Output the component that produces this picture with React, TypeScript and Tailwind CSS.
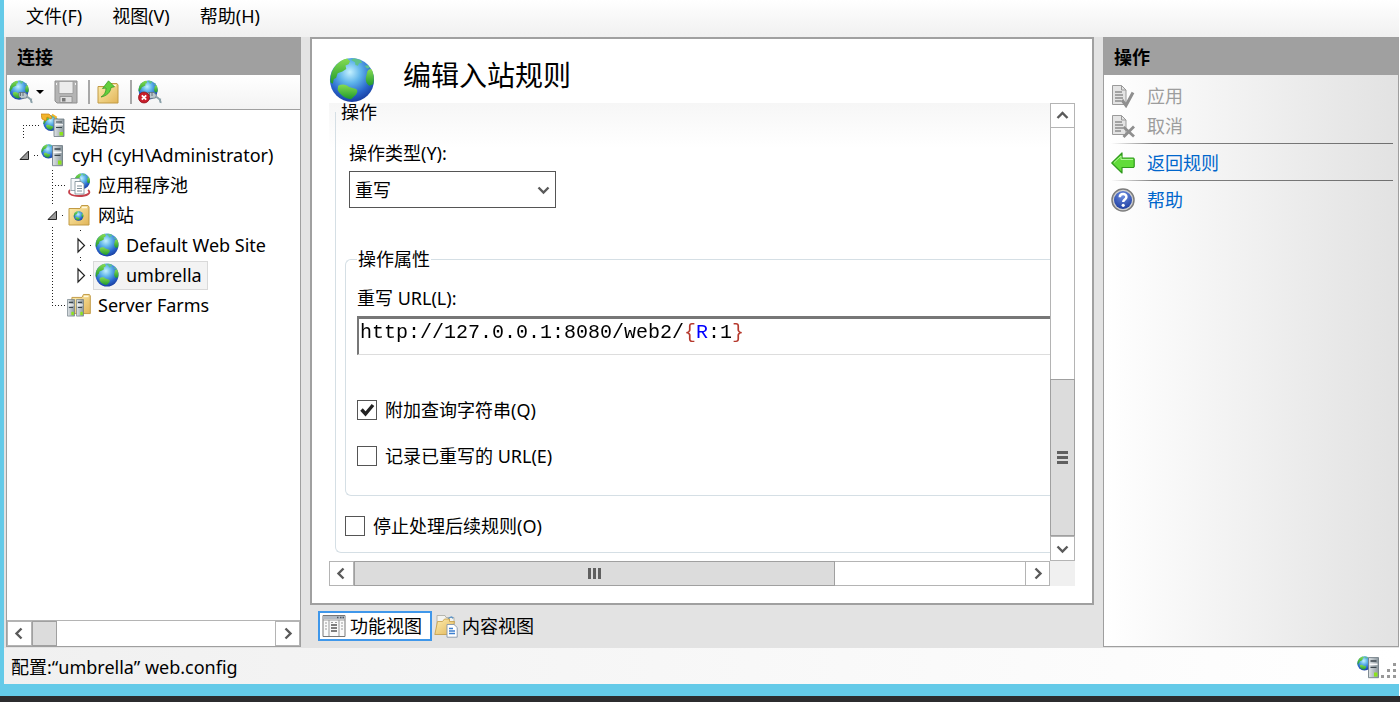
import React, { useState } from "react";

const Defs = () => (
  <svg className="absolute size-0" aria-hidden="true">
    <defs>
      <radialGradient id="ocean" cx="0.45" cy="0.32" r="0.72">
        <stop offset="0" stopColor="#c4f1ff" />
        <stop offset="0.35" stopColor="#5fb4ea" />
        <stop offset="0.7" stopColor="#2a66cc" />
        <stop offset="1" stopColor="#16379a" />
      </radialGradient>
      <linearGradient id="land" x1="0" y1="0" x2="0" y2="1">
        <stop offset="0" stopColor="#86dc52" />
        <stop offset="1" stopColor="#1f9a2c" />
      </linearGradient>
      <linearGradient id="folder" x1="0" y1="0" x2="1" y2="1">
        <stop offset="0" stopColor="#fdeeb0" />
        <stop offset="1" stopColor="#e2b558" />
      </linearGradient>
      <linearGradient id="metal" x1="0" y1="0" x2="1" y2="0">
        <stop offset="0" stopColor="#dfe4e7" />
        <stop offset="1" stopColor="#8b979e" />
      </linearGradient>
      <radialGradient id="helpBlue" cx="0.5" cy="0.25" r="0.8">
        <stop offset="0" stopColor="#6f8fe0" />
        <stop offset="1" stopColor="#1a3a9e" />
      </radialGradient>
    </defs>
  </svg>
);

// 24x24 globe, shared by most of the icons
const GlobeShape = ({ transform }: { transform?: string }) => (
  <g transform={transform}>
    <circle cx="12" cy="12" r="11.500" fill="url(#ocean)" />
    <path
      d="M1 9.500C2 5 5.500 1.600 9.500.8l1.500 1.400-.8 1.600-1.600.6.4 1.800-2 1.300-2.500 1-.8 2.500-1.200.5-.5 2.500-1.300-.8z"
      fill="url(#land)"
    />
    <path d="M11.500 1.500 13 .7l3.500.8.8 1.500-1.600.2-.6 1.300-1.300-.3-.2-1.500z" fill="#5fc28a" />
    <path
      d="M20 7.500c1-1.400 2-1.500 2.500-.6 1 2.300 1.200 5 .5 7.300l-2 .8c-1.300-.8-2-2.200-1.800-4z"
      fill="url(#land)"
    />
    <path
      d="M4.800 15c2-1.200 4.200-.8 5.700.6l3.700 1.100c1 .8.6 2-.2 3L11.500 22C8 21.800 5 19 4.500 17z"
      fill="url(#land)"
    />
    <path d="m18.500 4.500 2-.2.800 1.400-1.500.3z" fill="#5fc28a" />
  </g>
);

const ServerShape = ({ transform }: { transform?: string }) => (
  <g transform={transform}>
    <path d="M0 .5h10v17.500H0z" fill="url(#metal)" stroke="#6d7a82" strokeWidth="0.8" />
    <path d="M2 3.500h6M2 9h6" stroke="#3b464d" strokeWidth="1.200" />
    <path d="M1 6.300h8" stroke="#fff" strokeWidth="1.200" />
    <path d="M5.500 13.500h3.500v3.500H5.500z" fill="#8be31c" />
  </g>
);

const FolderShape = ({ transform }: { transform?: string }) => (
  <g transform={transform}>
    <path
      d="M1 4.500h11l1.500-3h6.500l1 1.500v18H1z"
      fill="url(#folder)"
      stroke="#c19a45"
      strokeWidth="1"
    />
    <path d="M14 3.500h5" stroke="#fff8dc" strokeWidth="1.500" />
  </g>
);

const Icon = ({ className = "size-6", children }: { className?: string; children: React.ReactNode }) => (
  <svg viewBox="0 0 24 24" className={`${className} shrink-0`} fill="none" aria-hidden="true">
    {children}
  </svg>
);

const GlobeIcon = ({ className }: { className?: string }) => (
  <Icon className={className}>
    <GlobeShape />
  </Icon>
);

const ConnectIcon = ({ failed }: { failed?: boolean }) => (
  <Icon>
    <GlobeShape transform="scale(.84)" />
    <path d="M10 12.500h6l2.500 2.500-1 3-5 .5-2.500-2z" fill="#b9c6cc" stroke="#66757d" strokeWidth=".8" />
    <path d="M11.500 12v4M14 12v4" stroke="#66757d" strokeWidth="1" />
    <path d="M18 17c2 0 2 2 4 2.500-.5 1.500 1 2 .5 3.500" stroke="#8aa0a8" strokeWidth="2" />
    {failed && (
      <>
        <circle cx="6" cy="17.500" r="5.500" fill="#c81e2b" stroke="#8d0f19" strokeWidth=".7" />
        <path d="m3.800 15.300 4.400 4.400m0-4.400-4.400 4.400" stroke="#fff" strokeWidth="1.800" />
      </>
    )}
  </Icon>
);

const SaveIcon = () => (
  <Icon>
    <path d="M1 1h22v22H3l-2-2z" fill="#b4b4b4" stroke="#8f8f8f" />
    <path d="M5 1.500h14v12H5z" fill="#ececec" stroke="#999" strokeWidth=".8" />
    <path d="M6 16.500h12v6H6z" fill="#dedede" stroke="#8c8c8c" strokeWidth=".8" />
    <path d="M8 18h3.500v3.500H8z" fill="#777" />
    <path d="M2.500 3v2M21.500 3v2" stroke="#f4f4f4" />
  </Icon>
);

const UpFolderIcon = () => (
  <Icon>
    <FolderShape transform="translate(1 2)" />
    <path
      d="M5 17c3.500-2 5-5 5-9L6.500 8.500 12.500.8l6 6-3.500.7C14.500 12.500 10.500 16 5 17z"
      fill="#63cf3c"
      stroke="#2f9221"
      strokeWidth=".7"
    />
  </Icon>
);

const StartPageIcon = () => (
  <Icon>
    <GlobeShape transform="translate(2 2) scale(.68)" />
    <path d="M0 1h8l3 3-1 2-4-2-1 4-4-2z" fill="#f3b52b" stroke="#c67d12" strokeWidth=".7" />
    <path d="M11 1.500 15 4l-1 2" stroke="#f3b52b" strokeWidth="1.800" />
    <ServerShape transform="translate(13 5.500)" />
  </Icon>
);

const ServerIcon = () => (
  <Icon>
    <GlobeShape transform="translate(0 1) scale(.62)" />
    <ServerShape transform="translate(11.500 2) scale(1 1.150)" />
  </Icon>
);

const AppPoolIcon = () => (
  <Icon>
    <GlobeShape transform="translate(7 0) scale(.68)" />
    <path d="M3 17c-3 3 1 6 9 6s13-3 9-6" stroke="#c5414b" strokeWidth="1.800" />
    <path d="M4 5.500h9v12H4z" fill="#f5f8fa" stroke="#8496a0" strokeWidth=".8" />
    <path d="M8 8.500h6l3 2.500v10H8z" fill="#fff" stroke="#73858f" strokeWidth=".8" />
    <path d="M10 13h5M10 15.500h5M10 18h5" stroke="#7d8f99" />
  </Icon>
);

const SitesIcon = () => (
  <Icon>
    <FolderShape transform="translate(1 1)" />
    <GlobeShape transform="translate(6.500 8) scale(.42)" />
  </Icon>
);

const FarmIcon = () => (
  <Icon>
    <FolderShape transform="translate(4 0) scale(.92 .98)" />
    <ServerShape transform="translate(.5 6) scale(.7 .95)" />
    <ServerShape transform="translate(9.500 6) scale(.7 .95)" />
  </Icon>
);

const DocShape = () => (
  <>
    <path d="M1.500 1.500h9l4.500 4.500v14.500H1.500z" fill="#e4e4e4" stroke="#9a9a9a" />
    <path d="M10.500 1.500V6h4.500" stroke="#9a9a9a" />
    <path d="M4 8h7M4 11h8M4 14h8M4 17h6" stroke="#8d8d8d" strokeWidth="1.300" />
  </>
);

const ApplyIcon = () => (
  <Icon>
    <DocShape />
    <path d="m11 16 4 5.500L22 8.500" stroke="#8f8f8f" strokeWidth="3" />
  </Icon>
);

const CancelIcon = () => (
  <Icon>
    <DocShape />
    <path d="m12.500 13 10.500 9.500M23 12.500 12.500 23" stroke="#8f8f8f" strokeWidth="2.800" />
  </Icon>
);

const BackIcon = () => (
  <Icon>
    <path
      d="M.8 12 11 2v5h11.500l.7 1v7.500l-.7 1H11V22z"
      fill="#62dc3a"
      stroke="#2f9a1c"
      strokeWidth="1.200"
      strokeLinejoin="round"
    />
    <path d="M3 11.500 10 5v3.500h12" stroke="#b4f59a" strokeWidth="1" />
  </Icon>
);

const HelpIcon = () => (
  <Icon>
    <circle cx="12" cy="12" r="11" fill="#d0d0d0" stroke="#7c7c7c" strokeWidth="1.500" />
    <circle cx="12" cy="12" r="9" fill="url(#helpBlue)" />
    <path d="M8.800 9.300c0-4.200 6.600-4.200 6.600-.4 0 2.600-3.200 2.500-3.200 5.100" stroke="#fff" strokeWidth="2.500" />
    <circle cx="12.200" cy="17.300" r="1.600" fill="#fff" />
  </Icon>
);

const FeaturesIcon = () => (
  <Icon>
    <path d="M1 1.500h22v21H1z" fill="#fafafa" stroke="#777" />
    <path d="M1.500 2h21v3h-21z" fill="#b3bac2" />
    <path d="M15 3.500h1.500M18 3.500h1.500M20.500 3.500H22" stroke="#4f5862" strokeWidth="1.500" />
    <path d="M1 6h22M7 6v16M17 6v16" stroke="#999" />
    <path d="M9 11h6M9 14h6M9 17h6" stroke="#555" strokeWidth="1.500" />
    <path d="M3 9h2M3 12h2M3 15h2M19 9h2M19 12h2M19 15h2M9 8.500h2M13 8.500h2" stroke="#9a9a9a" />
  </Icon>
);

const ContentIcon = () => (
  <Icon>
    <path d="M3 1.500h8l1 2h8v14H3z" fill="#f4f4f0" stroke="#a8a8a0" strokeWidth=".8" />
    <path d="M14 5.500c2-3 4-3 5-1" stroke="#5d94c8" strokeWidth="1.500" />
    <path d="m.8 20.500 2.700-13h5l2-2.500h5v2.500h5L18 20.500z" fill="url(#folder)" stroke="#c19a45" strokeWidth=".8" />
    <path d="M13 10.500h7l3.200 3v9.700H13z" fill="#fff" stroke="#8595a8" strokeWidth=".9" />
    <path d="M15 14.500h4M15 17h6M15 19.500h6" stroke="#3d7fd0" strokeWidth="1.300" />
  </Icon>
);

const chevrons = {
  left: "M8.500 1.500 3.500 6.500l5 5",
  right: "m4.500 1.500 5 5-5 5",
  up: "m1.500 9 5-5 5 5",
  down: "m1.500 4.500 5 5 5-5",
};

const Chevron = ({ dir }: { dir: keyof typeof chevrons }) => (
  <svg viewBox="0 0 13 13" className="size-[13px]" fill="none" aria-hidden="true">
    <path d={chevrons[dir]} stroke="#5a5a5a" strokeWidth="2.400" />
  </svg>
);

const ScrollButton = ({ dir, label }: { dir: keyof typeof chevrons; label: string }) => (
  <button
    aria-label={label}
    className="flex size-[25px] shrink-0 items-center justify-center border border-[#b4b4b4] bg-white"
  >
    <Chevron dir={dir} />
  </button>
);

// guides are drawn in a gutter whose width is the indent of the level
const nodes = [
  { label: "起始页", level: 0, icon: <StartPageIcon />, dots: "M16.500 15V30M16 15.500H32" },
  {
    label: "cyH (cyH\\Administrator)",
    level: 0,
    icon: <ServerIcon />,
    dots: "M27 15.500H32",
    open: true,
    arrowX: 13,
  },
  { label: "应用程序池", level: 1, icon: <AppPoolIcon />, dots: "M45.500 0V30M45 15.500H59" },
  { label: "网站", level: 1, icon: <SitesIcon />, dots: "M45.500 0V4M45.500 27V30M55 15.500H59", open: true, arrowX: 41 },
  {
    label: "Default Web Site",
    level: 2,
    icon: <GlobeIcon />,
    dots: "M45.500 0V30M73.500 0V3M73.500 27V30M83 15.500H86",
    open: false,
    arrowX: 71,
  },
  {
    label: "umbrella",
    level: 2,
    icon: <GlobeIcon />,
    dots: "M45.500 0V30M73.500 0V3M83 15.500H86",
    open: false,
    arrowX: 71,
    selected: true,
  },
  { label: "Server Farms", level: 1, icon: <FarmIcon />, dots: "M45.500 0V15M45 15.500H59" },
];

const gutterWidths = ["w-8", "w-[58px]", "w-[86px]"];

const Tree = () => (
  <ul role="tree" aria-label="连接" className="flex-1">
    {nodes.map((n) => (
      <li
        key={n.label}
        role="treeitem"
        aria-expanded={n.open}
        aria-selected={!!n.selected}
        className="flex h-[30px] items-center"
      >
        <svg
          className={`h-[30px] shrink-0 ${gutterWidths[n.level]}`}
          fill="none"
          aria-hidden="true"
        >
          <path d={n.dots} stroke="#222" strokeWidth="1" strokeDasharray="1 2" />
          {n.open === true && (
            <path
              d="M0 8.500 8.500 0v8.500z"
              transform={`translate(${n.arrowX} 11)`}
              fill="#999"
              stroke="#222"
            />
          )}
          {n.open === false && (
            <path
              d="M0 0 6.500 6.500 0 13z"
              transform={`translate(${n.arrowX} 9)`}
              fill="#fff"
              stroke="#222"
              strokeWidth="1.200"
            />
          )}
        </svg>
        <button
          className={`flex h-[29px] items-center gap-[7px] whitespace-nowrap border pr-[5px] pl-px ${
            n.selected ? "border-[#d9d9d9] bg-[#f3f3f3]" : "border-transparent"
          }`}
        >
          {n.icon}
          {n.label}
        </button>
      </li>
    ))}
  </ul>
);

const Connections = () => (
  <section className="flex w-[295px] shrink-0 flex-col border border-[#9f9f9f] bg-white">
    <h2 className="flex h-[37px] items-center bg-[#a0a0a0] px-[10px] font-bold">连接</h2>
    <div className="flex h-[35px] items-center border-b border-[#a0a0a0] bg-linear-to-b from-white to-[#f3f3f3] pl-[2px]">
      <button aria-label="连接到" className="flex items-center gap-[3px]">
        <ConnectIcon />
        <svg viewBox="0 0 8 4" className="h-1 w-2" aria-hidden="true">
          <path d="M0 0h8L4 4z" fill="#000" />
        </svg>
      </button>
      <button aria-label="保存" className="ml-[10px]">
        <SaveIcon />
      </button>
      <span className="mr-[6px] ml-[10px] h-6 w-[2px] bg-[#a8a8a8]" />
      <button aria-label="向上">
        <UpFolderIcon />
      </button>
      <span className="mr-[6px] ml-[10px] h-6 w-[2px] bg-[#a8a8a8]" />
      <button aria-label="断开连接">
        <ConnectIcon failed />
      </button>
    </div>
    <Tree />
    <div className="flex border-t border-[#b4b4b4]">
      <ScrollButton dir="left" label="向左滚动" />
      <span className="w-[25px] border border-[#a0a0a0] bg-[#dcdcdc]" />
      <span className="flex-1" />
      <ScrollButton dir="right" label="向右滚动" />
    </div>
  </section>
);

const CheckBox = ({ label, initial = false }: { label: string; initial?: boolean }) => {
  const [checked, setChecked] = useState(initial);
  return (
    <label className="flex h-6 w-fit items-center gap-2">
      <span className="relative flex size-5">
        <input
          type="checkbox"
          checked={checked}
          onChange={(e) => setChecked(e.target.checked)}
          className="size-5 appearance-none border border-[#555] bg-white"
        />
        {checked && (
          <svg
            viewBox="0 0 20 20"
            className="pointer-events-none absolute inset-0 size-5"
            fill="none"
            aria-hidden="true"
          >
            <path d="m4.500 9.500 4 4.500 7.500-9" stroke="#222" strokeWidth="3.400" />
          </svg>
        )}
      </span>
      {label}
    </label>
  );
};

const RuleForm = () => {
  const [url, setUrl] = useState("http://127.0.0.1:8080/web2/{R:1}");

  return (
    <form className="bg-linear-to-b from-[#f6f6f6] to-white to-10% pl-[6px]">
      <fieldset className="rounded-bl-md border-b border-l border-[#d5dfe5] pb-[14px] pl-[9px]">
        <legend className="-ml-1 h-[18px] leading-[18px]">操作</legend>
        <div className="pl-1">
          <label htmlFor="action-type" className="mt-5 block">
            操作类型(Y):
          </label>
          <div className="relative mt-[6px] h-[37px] w-[207px]">
            <select
              id="action-type"
              className="h-full w-full appearance-none border border-[#555] bg-white px-[5px]"
            >
              <option>重写</option>
            </select>
            <span className="pointer-events-none absolute top-3 right-[6px]">
              <Chevron dir="down" />
            </span>
          </div>
        </div>

        <fieldset className="mt-[39px] rounded-l-md border border-r-0 border-[#d5dfe5] pb-[27px] pl-[11px]">
          <legend className="px-px">操作属性</legend>
          <label htmlFor="rewrite-url" className="mt-[15px] block">
            重写 URL(L):
          </label>
          <div className="mt-[6px] h-[39px] border-t-[3px] border-b border-l-2 border-t-[#777] border-b-[#ddd] border-l-[#777]">
            {/* highlights the back-reference inside the url */}
            <input
              id="rewrite-url"
              type="text"
              spellCheck={false}
              value={url}
              onChange={(e) => setUrl(e.target.value)}
              className="block w-full bg-[linear-gradient(to_right,#000_27ch,#b5382c_27ch_28ch,#00f_28ch_29ch,#000_29ch_31ch,#b5382c_31ch)] bg-clip-text px-px pt-[2px] font-['Liberation_Mono',monospace] text-[20px] leading-6 text-transparent caret-black outline-none"
            />
          </div>
          <div className="mt-[43px] flex flex-col gap-[22px]">
            <CheckBox label="附加查询字符串(Q)" initial />
            <CheckBox label="记录已重写的 URL(E)" />
          </div>
        </fieldset>

        <div className="mt-[18px]">
          <CheckBox label="停止处理后续规则(O)" />
        </div>
      </fieldset>
    </form>
  );
};

const Workspace = () => (
  <main className="flex min-w-0 flex-1 flex-col">
    <section className="flex flex-1 flex-col border-2 border-[#a0a0a0] bg-white px-[17px] pb-[17px]">
      <header className="flex h-16 items-end gap-7">
        <GlobeIcon className="size-[46px]" />
        <h1 className="mb-2 text-[28px] leading-10">编辑入站规则</h1>
      </header>
      <div className="flex flex-1">
        <div className="flex min-w-0 flex-1 flex-col justify-between">
          <RuleForm />
          <div className="flex">
            <ScrollButton dir="left" label="向左滚动" />
            <span className="flex w-2/3 items-center justify-center gap-[2px] border border-[#a0a0a0] bg-[#dcdcdc]">
              <i className="h-[11px] w-[3px] bg-[#606060]" />
              <i className="h-[11px] w-[3px] bg-[#606060]" />
              <i className="h-[11px] w-[3px] bg-[#606060]" />
            </span>
            <span className="flex-1 border-y border-[#b4b4b4]" />
            <ScrollButton dir="right" label="向右滚动" />
          </div>
        </div>
        <div className="flex w-[25px] flex-col">
          <ScrollButton dir="up" label="向上滚动" />
          <span className="flex-1 border-x border-[#b4b4b4]" />
          <span className="flex h-[157px] flex-col items-center justify-center gap-[2px] border border-[#a0a0a0] bg-[#dcdcdc]">
            <i className="h-[3px] w-[11px] bg-[#606060]" />
            <i className="h-[3px] w-[11px] bg-[#606060]" />
            <i className="h-[3px] w-[11px] bg-[#606060]" />
          </span>
          <ScrollButton dir="down" label="向下滚动" />
          <span className="h-[25px] bg-[#f0f0f0]" />
        </div>
      </div>
    </section>
    <div className="flex gap-[2px] px-2 pt-[6px] pb-[7px]" role="tablist">
      <button
        role="tab"
        aria-selected="true"
        className="flex h-[30px] items-center gap-1 border-2 border-[#3f97ea] bg-white pr-2 pl-[2px]"
      >
        <FeaturesIcon />
        功能视图
      </button>
      <button role="tab" aria-selected="false" className="flex h-[30px] items-center gap-1">
        <ContentIcon />
        内容视图
      </button>
    </div>
  </main>
);

const Divider = () => (
  <hr className="mt-[2px] mb-1 h-px border-0 bg-linear-to-r from-transparent via-[#808080] via-15% to-[#707070]" />
);

const Actions = () => (
  <aside className="w-[296px] shrink-0 border border-[#9f9f9f] bg-linear-to-r from-white to-[#e2e2e2]">
    <h2 className="flex h-[37px] items-center bg-[#a0a0a0] px-[10px] font-bold">操作</h2>
    <div className="py-[6px] pr-[5px] pl-[7px]">
      <button disabled className="flex h-[30px] items-center gap-3 text-[#9d9d9d]">
        <ApplyIcon />
        应用
      </button>
      <button disabled className="flex h-[30px] items-center gap-3 text-[#9d9d9d]">
        <CancelIcon />
        取消
      </button>
      <Divider />
      <a href="#rules" className="flex h-[30px] items-center gap-3 text-[#0066cc]">
        <BackIcon />
        返回规则
      </a>
      <Divider />
      <a href="#help" className="flex h-[30px] items-center gap-3 text-[#0066cc]">
        <HelpIcon />
        帮助
      </a>
    </div>
  </aside>
);

const Grip = () => (
  <svg viewBox="0 0 16 16" className="size-4" fill="#999" aria-hidden="true">
    <path d="M12 0h3v3h-3zM6 6h3v3H6zM12 6h3v3h-3zM0 12h3v3H0zM6 12h3v3H6zM12 12h3v3h-3z" />
  </svg>
);

export default function App() {
  return (
    <div className="flex min-h-screen flex-col border-b-[6px] border-[#2c2c2e] bg-white pr-px font-['Noto_Sans','Noto_Sans_CJK_SC',sans-serif] text-[18px] leading-6 text-black">
      <Defs />
      <div className="flex flex-1 flex-col border-b-[12px] border-l-4 border-[#64cae8] bg-[#e3e3e3]">
        <nav className="flex h-[37px] gap-[30px] bg-linear-to-b from-white to-[#f0f0f0] px-[22px] pt-1">
          <button className="h-6">文件(F)</button>
          <button className="h-6">视图(V)</button>
          <button className="h-6">帮助(H)</button>
        </nav>
        <div className="flex flex-1 gap-[9px] pl-[2px]">
          <div className="flex pb-px">
            <Connections />
          </div>
          <Workspace />
          <div className="flex pb-px">
            <Actions />
          </div>
        </div>
        <footer className="flex h-9 items-center justify-between bg-linear-to-r from-[#f0f0f0] to-white pt-[2px] pr-[2px] pl-[7px]">
          <span>配置:“umbrella” web.config</span>
          <span className="flex items-end">
            <ServerIcon />
            <Grip />
          </span>
        </footer>
      </div>
    </div>
  );
}
